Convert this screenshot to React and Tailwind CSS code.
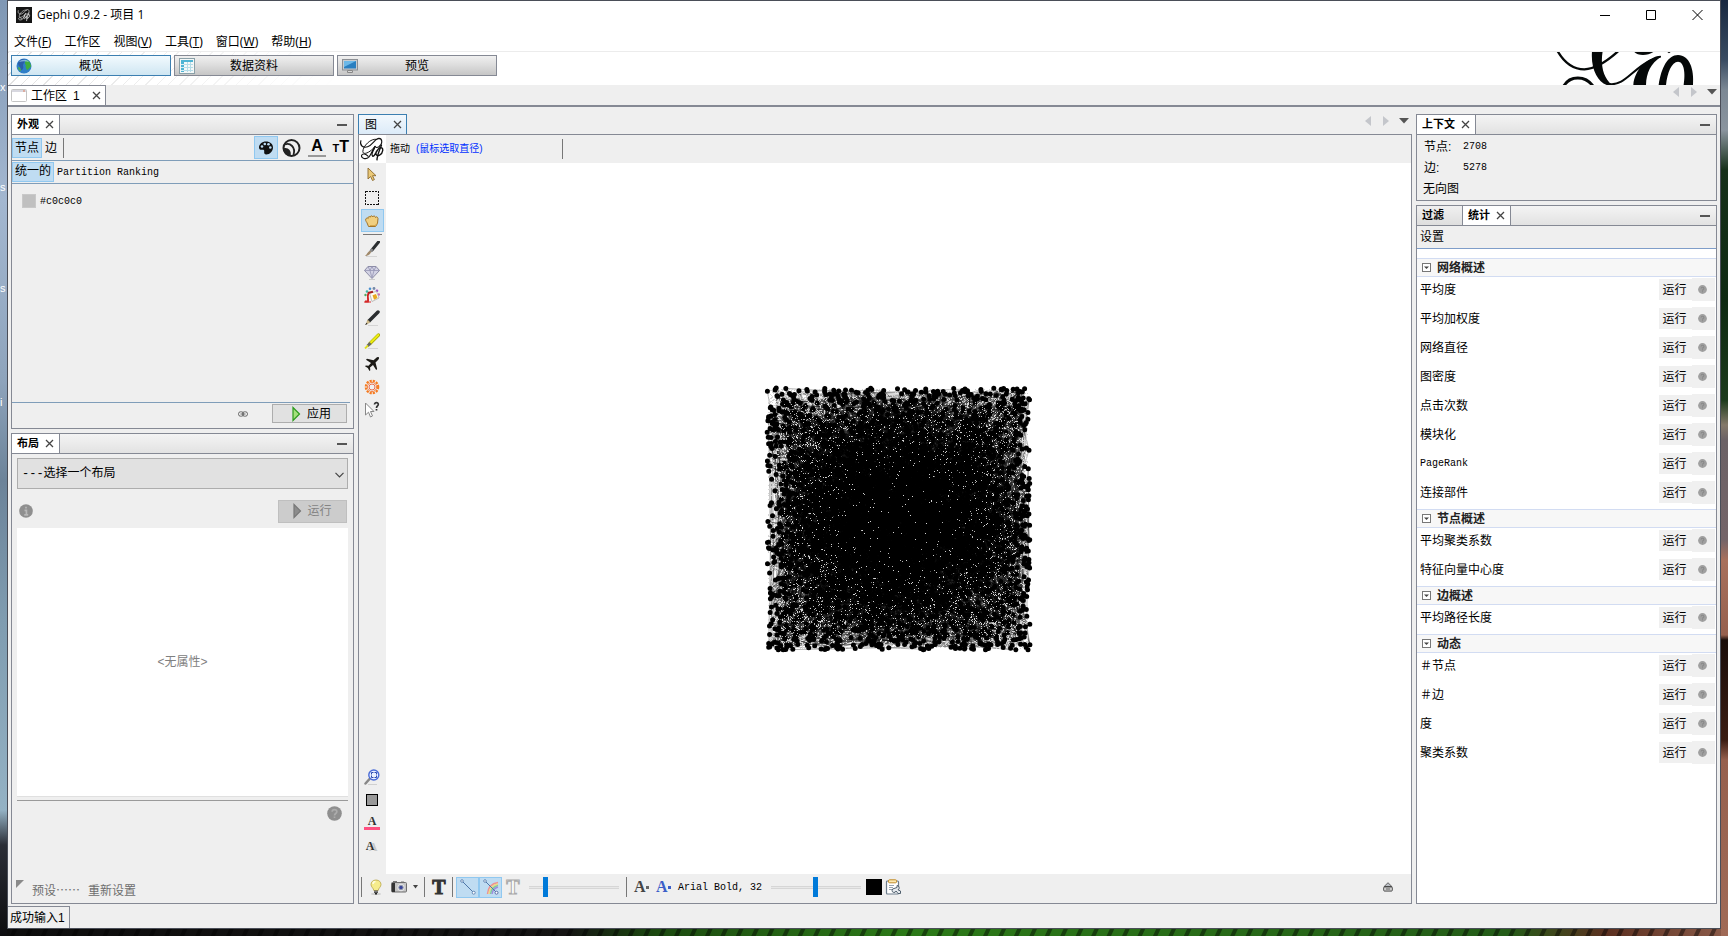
import React from "react";
import clsx from "clsx";

const mono = "font-['Liberation_Mono','Noto_Sans_CJK_SC',monospace] text-[10px]";

/* ---------- random graph drawing ---------- */

function makeRandom(seed) {
  let s = seed;
  return () => {
    s = (s * 1664525 + 1013904223) % 4294967296;
    return s / 4294967296;
  };
}

function buildGraph() {
  const rand = makeRandom(2708);
  const nodes = Array.from({ length: 2708 }, () => [3 + rand() * 263, 3 + rand() * 262]);
  const edges = Array.from({ length: 5278 }, () => {
    const a = nodes[Math.floor(rand() * nodes.length)];
    const b = nodes[Math.floor(rand() * nodes.length)];
    return `M${a[0].toFixed(1)} ${a[1].toFixed(1)}L${b[0].toFixed(1)} ${b[1].toFixed(1)}`;
  });
  const inner = [];
  const outer = [];
  for (let i = 0; i < 26000; i++) {
    const x = Math.floor(4 + rand() * 260);
    const y = Math.floor(4 + rand() * 260);
    const d = Math.hypot(x - 134, y - 134) / 160;
    if (rand() < 0.03 + 0.85 * d ** 3) {
      (rand() < 0.2 && Math.max(Math.abs(x - 134), Math.abs(y - 134)) < 118 ? inner : outer).push(`M${x} ${y}h1v1h-1z`);
    }
  }
  return {
    nodePath: nodes.map(([x, y]) => `M${x.toFixed(1)} ${y.toFixed(1)}h.01`).join(""),
    edgePath: edges.join(""),
    innerPath: inner.join(""),
    outerPath: outer.join(""),
  };
}

const graph = buildGraph();

function GraphDrawing() {
  return (
    <svg width="269" height="268" viewBox="0 0 269 268" role="img" aria-label="图">
      <path d={graph.edgePath} stroke="#000" strokeWidth="0.3" fill="none" />
      <path d={graph.outerPath} fill="#d4d4d4" shapeRendering="crispEdges" />
      <path d={graph.nodePath} stroke="#000" strokeWidth="5" strokeLinecap="round" fill="none" />
      <path d={graph.innerPath} fill="#b4b4b4" shapeRendering="crispEdges" />
    </svg>
  );
}

/* ---------- icons ---------- */

function Svg({ size = 16, box = 16, children, className }) {
  return (
    <svg width={size} height={size} viewBox={`0 0 ${box} ${box}`} fill="none" className={clsx("shrink-0", className)} aria-hidden="true">
      {children}
    </svg>
  );
}

function LogoMark({ color = "#111", width = 26, height = 28 }) {
  return (
    <svg width={width} height={height} viewBox="0 0 81 84" fill="none" stroke={color} strokeWidth="3.4" strokeLinecap="round" aria-hidden="true">
      <path d="M6 16C1 30 12 40 27 35C44 29 50 9 62 9C74 10 74 27 62 35C57 38 52 37 50 34" />
      <path d="M56 12C36 7 12 34 12 50C13 62 34 54 50 34" strokeWidth="3" />
      <path d="M50 34C42 44 38 60 30 68C22 75 6 72 8 62C11 54 22 58 28 64" />
      <path d="M48 40C40 52 38 62 43 65C52 64 54 42 66 38C78 36 76 54 64 61C56 65 50 60 54 50" strokeWidth="4.2" />
      <path d="M70 30C64 46 57 60 56 76" strokeWidth="4.2" />
    </svg>
  );
}

function BannerLogo() {
  return (
    <svg width="140" height="33" viewBox="0 0 420 99" fill="#050808" aria-hidden="true">
      <g fill="none" stroke="#050808">
        <path d="M4-4C28 38 58 52 85 52C122 50 155 26 186-2" strokeWidth="7" />
        <path d="M24 101C42 70 88 70 110 101" strokeWidth="9" />
        <path d="M160 96C205 102 225 55 285 24C295 18 305 14 314 14" strokeWidth="6" />
      </g>
      <path d="M108-2H140C134 32 138 74 168 99H152C124 88 104 50 108-2Z" />
      <path d="M315 12C272 18 236 52 232 99H270C271 62 284 34 315 14Z" />
      <path d="M308 99C316 46 336 9 366 9C400 10 415 50 411 99H383C389 62 384 29 366 29C347 29 334 62 330 99Z" />
      <path d="M235 0C245 12 275 12 292 0ZM334 0L339 4L344 0Z" />
    </svg>
  );
}

const GlobeIcon = () => (
  <Svg>
    <circle cx="8" cy="8" r="7.5" fill="#2f7fc8" />
    <path d="M2 5C4 1 8 0 9 2C9 5 7 5 7 8C8 10 6 13 5 12C5 9 2 8 2 5Z" fill="#2a5ea8" />
    <path d="M10 2C14 3 15 6 15 9C13 9 13 12 11 12C10 10 9 9 10 7C8 6 9 4 10 2Z" fill="#3fae3f" />
    <path d="M2 9C4 9 5 11 5 13C3 13 2 11 2 9Z" fill="#49b04a" />
    <path d="M3 4C5 1 11 1 13 4C10 3 6 3 3 4Z" fill="#a9d4f2" opacity=".7" />
  </Svg>
);
const TableIcon = () => (
  <Svg>
    <rect x=".5" y=".5" width="15" height="15" fill="#f4f8f8" stroke="#8aa0a8" />
    <rect x="2" y="2" width="12" height="2" fill="#4db4d4" />
    <rect x="2" y="4" width="3" height="10" fill="#4db4d4" />
    <path d="M5 6.500h9M5 9.500h9M5 12.500h9M8.500 4v10M11.500 4v10" stroke="#b4dce8" />
    <path d="M2 6.500h3M2 9.500h3M2 12.500h3" stroke="#d4eef6" />
  </Svg>
);
const MonitorIcon = () => (
  <Svg>
    <rect x=".5" y="1.500" width="15" height="10.500" fill="#c8ccd0" stroke="#8c8f94" />
    <rect x="2" y="3" width="12" height="7.500" fill="#2a7fc0" />
    <path d="M2 3h12L2 9z" fill="#6cb8e8" />
    <path d="M5.500 12.500h5v2h-5z" fill="#d8d8d8" stroke="#888" />
  </Svg>
);
const WindowIcon = () => (
  <Svg>
    <rect x=".5" y="1.500" width="15" height="12" rx="1" fill="#fff" stroke="#c4c4c4" />
    <path d="M1 3h14" stroke="#d8d8e0" strokeWidth="2" />
    <path d="M12 3h2" stroke="#e08060" />
  </Svg>
);
const PaletteIcon = () => (
  <Svg>
    <path d="M8 1.500C4 1.500 1 4.200 1 7.500c0 2 1.500 2.600 3 2.300 1.600-.3 2.500.2 2.200 1.700-.3 1.700.5 3 2 3C12 14.500 15 11 15 7.500 15 4 12 1.500 8 1.500Z" fill="#111" />
    <g fill="#bddcf4"><circle cx="4" cy="6.500" r="1.300" /><circle cx="6.800" cy="4" r="1.300" /><circle cx="10.500" cy="4.200" r="1.300" /><circle cx="12.300" cy="7.500" r="1.300" /></g>
  </Svg>
);
const SizeIcon = () => (
  <Svg size={20} box={20}>
    <circle cx="10.500" cy="10" r="8" stroke="#222" strokeWidth="2" />
    <path d="M4 6.500C9 4.500 15 9 12.500 17" stroke="#222" strokeWidth="1.800" />
    <path d="M2.500 10.500C6 9 11 12 9.500 18C5 17.500 2.500 15 2.500 10.500Z" fill="#222" />
  </Svg>
);
const CursorIcon = () => (
  <Svg>
    <path d="M4 1v11l2.600-2.500 1.900 4 1.900-.9-1.900-3.900h3.500z" fill="#eac978" stroke="#8d6a2c" strokeWidth=".9" />
  </Svg>
);
const SelectRectIcon = () => (
  <Svg><rect x="1.500" y="1.500" width="13" height="13" stroke="#111" strokeDasharray="2 1" shapeRendering="crispEdges" /></Svg>
);
const HandIcon = () => (
  <Svg>
    <path d="M1.800 6C1 8 3 9 3.500 11L4.500 13.500H11.500L13.500 10.500L14 5.500C13.500 3.500 12 3.500 11.500 4.500C11 2.500 9.300 2.500 8.700 4C8.200 2.300 6.500 2.500 6.200 4.200C5.300 3 4 3.500 4.200 5.500C3.500 4.500 2.300 5 1.800 6Z" fill="#f0cf80" stroke="#a2742a" />
    <path d="M6 12.500h5.500l1-2" stroke="#d6a84c" />
  </Svg>
);
const BrushIcon = () => (
  <Svg>
    <path d="M2 15.500h11" stroke="#d4d4d4" />
    <path d="M14.500 1L8 9" stroke="#2b2e30" strokeWidth="3" strokeLinecap="round" />
    <path d="M8.500 8L6 11" stroke="#888" strokeWidth="2.500" />
    <path d="M7 10.500C6.500 14 3 15 1 15C3 13.500 3.500 11 5.500 10Z" fill="#a0896a" />
  </Svg>
);
const DiamondIcon = () => (
  <Svg>
    <path d="M4 2.500h8l3.500 4L8 14.500.5 6.500z" fill="#d2d2e4" stroke="#8c8ca6" />
    <path d="M.5 6.500h15M4 2.500l2 4L8 14l2-7.500 2-4M6 6.500l2-4 2 4" stroke="#9696b4" strokeWidth=".8" />
    <path d="M5 15.500h6" stroke="#ccc" />
  </Svg>
);
const PaintIcon = () => (
  <Svg>
    <g><circle cx="3" cy="4.500" r="1.300" fill="#40b8a8" /><circle cx="6" cy="1.800" r="1.300" fill="#4a90d0" /><circle cx="10" cy="1.500" r="1.400" fill="#7488a8" /><circle cx="13" cy="3.800" r="1.300" fill="#a050c8" /><circle cx="14.800" cy="7.500" r="1.200" fill="#c868b8" /><circle cx="1.500" cy="8" r="1.200" fill="#50a860" /></g>
    <path d="M5.500 6L12.500 4.500L15 11L8 14.500Z" fill="#fffaf0" stroke="#a8a8a8" strokeWidth=".7" />
    <path d="M8.500 8.200l3.500-1.200 1.500 4-3.500 1.700z" fill="#e8a820" />
    <path d="M4 6L9 4.800" stroke="#a82020" strokeWidth="2" />
    <path d="M4.500 6C3 9 4.500 12 4 14.500H1" stroke="#d01c1c" strokeWidth="1.800" />
    <path d="M0 15h7" stroke="#d83030" />
  </Svg>
);
const PencilIcon = () => (
  <Svg>
    <path d="M4 15.500h10" stroke="#d4d4d4" />
    <path d="M14 2L5 11" stroke="#2b2e30" strokeWidth="3.500" strokeLinecap="round" />
    <path d="M3.500 9.500l3 3L1.500 15z" fill="#cdb98a" />
    <path d="M1 15l1.500-2.200 1 1.200z" fill="#222" />
  </Svg>
);
const HighlighterIcon = () => (
  <Svg>
    <path d="M4 15.500h10" stroke="#d4d4d4" />
    <path d="M14.500 2L6 10.500" stroke="#a8a800" strokeWidth="3.200" strokeLinecap="round" />
    <path d="M14.300 2L6 10.300" stroke="#ecec14" strokeWidth="2" strokeLinecap="round" />
    <path d="M6.500 10L3.500 13" stroke="#666" strokeWidth="2.800" />
    <path d="M4 12.500L1 15.500" stroke="#dede20" strokeWidth="1.800" />
  </Svg>
);
const PlaneIcon = () => (
  <Svg>
    <path d="M14.800 1.200C14 .6 12.800 1.200 11.800 2.200L9.500 4.300L3 2.800L2 3.800L7 7L4.500 9.800L1.800 9.500L1 10.300L3.800 12L5.500 15L6.300 14.200L6 11.500L9 9L12.200 14L13.200 13L11.500 6.600L13.800 4.200C14.800 3.200 15.400 2 14.800 1.200Z" fill="#1c1a16" />
  </Svg>
);
const SunIcon = () => (
  <Svg>
    <circle cx="8" cy="8" r="6.200" stroke="#f57a20" strokeWidth="2.200" strokeDasharray="2.200 1.050" />
    <circle cx="8" cy="8" r="4.600" stroke="#f4884a" />
    <circle cx="8" cy="8" r="3" stroke="#e86040" strokeWidth=".9" fill="#f0f0f0" />
  </Svg>
);
const HelpCursorIcon = () => (
  <Svg size={18} box={18}>
    <path d="M2.500 2v12l3-2.800 2 4.800 2-1-2-4.500h3.500z" fill="#fff" stroke="#888" />
    <path d="M11.500 3.500C11.500 1 15.500 1 15.300 3.500C15.200 5 13.500 5 13.500 7M13.500 8v1.500" stroke="#333" strokeWidth="1.700" />
  </Svg>
);
const MagnifierIcon = () => (
  <Svg>
    <path d="M5.500 10L1.500 14.500" stroke="#888" strokeWidth="2.500" strokeLinecap="round" />
    <circle cx="9.800" cy="6" r="5" fill="#eaf1ff" stroke="#4a6cd8" strokeWidth="1.400" />
    <path d="M7.500 5.500v-2h2M10.500 3.500h2v2M12.500 6.500v2h-2M9.500 8.500h-2v-2" stroke="#2a48b0" />
    <path d="M4 15.500h9" stroke="#d0d0d0" />
  </Svg>
);
const BulbIcon = () => (
  <Svg>
    <ellipse cx="8" cy="15" rx="5" ry="1" fill="#ccc" />
    <path d="M8 1C4.800 1 3 3.200 3 5.500C3 8 5.500 9 5.800 11.500H10.200C10.500 9 13 8 13 5.500C13 3.200 11.200 1 8 1Z" fill="#f6ec8c" stroke="#b8a448" strokeWidth=".8" />
    <path d="M5 5C5 3.500 6 2.500 7.500 2.500" stroke="#fffde0" strokeWidth="1.500" />
    <path d="M6 12h4M6 13.300h4" stroke="#555" strokeWidth="1.200" /><path d="M7 14.800h2" stroke="#222" strokeWidth="1.500" />
  </Svg>
);
const CameraIcon = () => (
  <Svg>
    <path d="M2 2.500h4M10 3h3" stroke="#777" />
    <rect x=".5" y="3.500" width="15" height="9.500" rx="1" fill="#c4c4c4" stroke="#6e6e6e" />
    <path d="M1 4h3v9H1z" fill="#333" />
    <circle cx="10" cy="8.500" r="3.300" fill="#9aa0b0" stroke="#ececec" /><circle cx="10" cy="8.500" r="1.700" fill="#39459a" />
  </Svg>
);
const LineIcon = () => (
  <Svg>
    <path d="M3 3L13 13" stroke="#4f76a8" /><circle cx="2" cy="2" r="1.300" fill="#fff" stroke="#5a80b0" strokeWidth=".9" /><circle cx="13.700" cy="13.700" r="1.500" fill="#fff" stroke="#5a80b0" strokeWidth=".9" />
  </Svg>
);
const RainbowIcon = () => (
  <Svg>
    <path d="M4.500 15C5 9 8.500 4.500 15 3.500" stroke="#f09090" strokeWidth="1.500" /><path d="M6 15C6.500 10 9.500 6 15 5" stroke="#f0d880" strokeWidth="1.500" />
    <path d="M7.500 15C8 11 10.500 7.500 15 6.500" stroke="#84cc98" strokeWidth="1.500" /><path d="M9 15C9.500 12 11.500 9 15 8" stroke="#9c8ce0" strokeWidth="1.500" />
    <path d="M3 3L13 13" stroke="#4f76a8" /><circle cx="2" cy="2" r="1.300" fill="#fff" stroke="#5a80b0" strokeWidth=".9" /><circle cx="13.500" cy="13.700" r="1.500" fill="#fff" stroke="#5060a0" strokeWidth=".9" />
  </Svg>
);
const ClipboardIcon = () => (
  <Svg>
    <rect x="1.500" y="2" width="12" height="13" rx="1" fill="#fff" stroke="#6c7c8c" strokeWidth="1.200" />
    <rect x="3.500" y=".8" width="8" height="3" rx="1" fill="#fbe8b0" stroke="#c08a28" />
    <path d="M4 6.500h5M4 8.500h4M4 10.500h3" stroke="#98a4b0" />
    <path d="M9 9.500a2 2 0 1 0 2 2.500l2 2.500h2.500V12l-2.500-1.200A2.300 2.300 0 0 0 12 6.500v2z" fill="#e6eaee" stroke="#50606e" strokeWidth="1" />
  </Svg>
);
const EjectIcon = () => (
  <Svg size={10} box={10}>
    <path d="M5 .7L8.800 4.500H1.200z" fill="#bcc0c6" stroke="#444" strokeWidth=".8" /><rect x=".8" y="5" width="8.400" height="4" rx=".6" fill="#fff" stroke="#333" strokeWidth="1" /><path d="M2.500 7h5" stroke="#333" />
  </Svg>
);
const Cross = ({ size = 9 }) => (
  <Svg size={size} box={9}><path d="M1 1l7 7M8 1l-7 7" stroke="#444" strokeWidth="1.300" /></Svg>
);
const PlayIcon = ({ gray }) => (
  <Svg>
    <path d="M5 1.500v13L11.500 8z" fill={gray ? "#8c8c8c" : "#a4e07c"} stroke={gray ? "#777" : "#2c9a1c"} strokeWidth="1.200" />
  </Svg>
);

function RoundBadge({ mark, size }) {
  return (
    <svg width={size} height={size} viewBox="0 0 16 16" aria-hidden="true" className="shrink-0">
      <circle cx="8" cy="8" r="7.800" fill={mark === "small" ? "#a0a0a0" : "#8f8f8f"} />
      {mark === "info" ? (
        <path d="M8 3v2.200M6.300 7.300H8.500V12.500M6 12.500h4.500" stroke="#b8b8b8" strokeWidth="1.900" fill="none" />
      ) : (
        <path d="M5.500 6.200C5.500 3.200 10.500 3.200 10.500 6.200C10.500 8 8 8 8 10M8 11.200v1.600" stroke={mark === "small" ? "#888888" : "#acacac"} strokeWidth="1.800" fill="none" />
      )}
    </svg>
  );
}

function ScrollArrows() {
  return (
    <div className="flex items-center gap-3">
      <button aria-label="向左"><svg width="6" height="10" viewBox="0 0 6 10"><path d="M6 0v10L0 5z" fill="#c4c6cb" /></svg></button>
      <button aria-label="向右"><svg width="6" height="10" viewBox="0 0 6 10"><path d="M0 0v10l6-5z" fill="#c4c6cb" /></svg></button>
      <button aria-label="列表" className="-ml-0.5"><svg width="10" height="6" viewBox="0 0 10 6"><path d="M0 0h10L5 5.500z" fill="#555" /></svg></button>
    </div>
  );
}

/* ---------- shared panel parts ---------- */

function PanelHeader({ tabs }) {
  return (
    <div className="flex h-5 shrink-0 items-stretch border-b border-[#858994] bg-linear-to-b from-[#f4f4f4] to-[#e2e2e2]">
      {tabs.map((t) => (
        <button
          key={t.label}
          className={clsx(
            "flex items-center gap-1.5 border-r border-[#858994] pl-[5px] text-[11px] font-bold leading-none",
            t.active ? "bg-white pr-[5px]" : "bg-linear-to-b from-[#f0f0f0] to-[#dedede] pr-[18px]"
          )}
        >
          {t.label}
          {t.active && <Cross />}
        </button>
      ))}
      <button aria-label="最小化" className="ml-auto flex items-center pr-1.5">
        <span className="block h-0.5 w-2.5 bg-[#555]" />
      </button>
    </div>
  );
}

const sel = "border border-[#90c8f0] bg-[#bfdcf2]";

/* ---------- window chrome ---------- */

const menus = [["文件", "F"], ["工作区"], ["视图", "V"], ["工具", "T"], ["窗口", "W"], ["帮助", "H"]];

function TitleBar() {
  return (
    <header className="flex h-7 shrink-0 items-center bg-white pl-2 pr-[17px]">
      <span className="flex size-4 items-center justify-center bg-[#151515]"><LogoMark color="#fff" width={14} height={14} /></span>
      <h1 className="ml-[5px] flex-1 font-['Open_Sans','Noto_Sans_CJK_SC',sans-serif] text-xs text-black">Gephi 0.9.2 - 项目 1</h1>
      <div className="flex items-center gap-9">
        <button aria-label="最小化"><svg width="10" height="10"><path d="M0 5.500h10" stroke="#000" /></svg></button>
        <button aria-label="最大化"><svg width="10" height="10"><path d="M.5.5h9v9h-9z" stroke="#000" fill="none" /></svg></button>
        <button aria-label="关闭"><svg width="11" height="10"><path d="M.5 0l10 10M10.500 0l-10 10" stroke="#000" /></svg></button>
      </div>
    </header>
  );
}

function MenuBar() {
  return (
    <nav className="flex h-[23px] shrink-0 items-center gap-[13px] border-b border-[#ececec] bg-white pl-1.5 pt-1 font-['Noto_Sans','Noto_Sans_CJK_SC',sans-serif] text-xs leading-none">
      {menus.map(([name, key]) => (
        <button key={name}>
          {name}
          {key && <>(<span className="underline">{key}</span>)</>}
        </button>
      ))}
    </nav>
  );
}

function Perspectives() {
  const items = [
    { label: "概览", icon: <GlobeIcon />, active: true },
    { label: "数据资料", icon: <TableIcon /> },
    { label: "预览", icon: <MonitorIcon /> },
  ];
  return (
    <div className="flex h-[33px] shrink-0 justify-between bg-[linear-gradient(to_right,transparent,white_330px),repeating-linear-gradient(135deg,#e2e2e2_0_1px,white_1px_8px)] pl-[3px] pr-6">
      <div className="flex gap-[3px] pt-[3px]">
        {items.map((i) => (
          <button
            key={i.label}
            className={clsx(
              "flex h-[21px] w-40 items-center border pl-1 pr-5 text-xs leading-none",
              i.active
                ? "border-[#3c7fb1] bg-linear-to-b from-[#f2fafe] to-[#cfe6f2]"
                : "border-[#858994] bg-linear-to-b from-[#f0f0f0] via-[#dcdcdc] to-[#c6c6c6]"
            )}
          >
            {i.icon}
            <span className="flex-1">{i.label}</span>
          </button>
        ))}
      </div>
      <BannerLogo />
    </div>
  );
}

function WorkspaceBar() {
  return (
    <div className="flex h-[22px] shrink-0 justify-between border-b-2 border-[#858994]">
      <button className="flex items-center border-r border-t border-[#858994] bg-white pl-[3px] pr-1 text-xs leading-none">
        <WindowIcon />
        <span className="ml-1">工作区</span>
        <span className="ml-1.5">1</span>
        <span className="ml-3"><Cross /></span>
      </button>
      <div className="flex items-start pr-[3px] pt-0.5"><ScrollArrows /></div>
    </div>
  );
}

/* ---------- left column ---------- */

function AppearancePanel() {
  return (
    <section aria-label="外观" className="flex h-[315px] shrink-0 flex-col border border-[#858994]">
      <PanelHeader tabs={[{ label: "外观", active: true }]} />
      <div className="flex h-[26px] shrink-0 items-center border-b border-[#7f9db9] text-xs leading-none">
        <button className={clsx("h-5 px-0.5", sel)}>节点</button>
        <button className="ml-[3px]">边</button>
        <span className="ml-1.5 h-5 w-px bg-[#777]" />
        <div className="ml-auto flex items-center gap-[3px] pr-1">
          <button aria-label="颜色" className={clsx("flex h-[23px] w-6 items-center justify-center", sel)}><PaletteIcon /></button>
          <button aria-label="大小" className="mr-1"><SizeIcon /></button>
          <button aria-label="标签颜色" className="flex w-[18px] flex-col items-center gap-0.5 font-['Liberation_Sans',sans-serif] text-base font-bold leading-[14px]">
            A<span className="h-0.5 w-full bg-[#999]" />
          </button>
          <button aria-label="标签尺寸" className="ml-0.5 flex w-[18px] items-baseline justify-end font-['Liberation_Sans',sans-serif] text-base font-bold leading-4"><span className="text-[11px]">T</span>T</button>
        </div>
      </div>
      <div className={clsx("flex h-[23px] shrink-0 items-center border-b border-[#7f9db9]", mono)}>
        <button className={clsx("h-5 px-0.5 text-xs leading-none", sel)}>统一的</button>
        <button className="ml-[3px]">Partition</button>
        <button className="ml-1.5">Ranking</button>
      </div>
      <div className={clsx("flex flex-1 items-start gap-1 pl-2.5 pt-2.5", mono)}>
        <button aria-label="选择颜色" className="size-3.5 border border-[#c9c9c9] bg-[#c0c0c0]" />
        <span>#c0c0c0</span>
      </div>
      <div className="mr-[3px] flex h-[26px] shrink-0 items-start justify-end border-t border-[#7f9db9] pr-[3px] pt-px">
        <button aria-label="链接" className="mr-6 flex h-[19px] items-center">
          <svg width="10" height="6" viewBox="0 0 10 6" fill="none" stroke="#666"><rect x=".5" y=".8" width="5" height="4.400" rx="2" /><rect x="4.500" y=".8" width="5" height="4.400" rx="2" /><path d="M2.500 3h5" /></svg>
        </button>
        <button className="flex h-[19px] w-[75px] items-center justify-center gap-[3px] border border-[#adadad] bg-[#e1e1e1] text-xs leading-none">
          <PlayIcon />应用
        </button>
      </div>
    </section>
  );
}

function LayoutPanel() {
  return (
    <section aria-label="布局" className="flex min-h-0 flex-1 flex-col border border-[#858994]">
      <PanelHeader tabs={[{ label: "布局", active: true }]} />
      <div className="flex flex-1 flex-col px-[5px]">
        <div className="relative mt-1">
          <select aria-label="布局" className="h-[31px] w-full appearance-none border border-[#adadad] bg-[#e1e1e1] pl-1 font-['Liberation_Mono','Noto_Sans_CJK_SC',monospace] text-xs">
            <option>---选择一个布局</option>
          </select>
          <svg width="9" height="6" viewBox="0 0 9 6" className="pointer-events-none absolute right-1 top-3.5"><path d="M.5.8l4 4 4-4" fill="none" stroke="#444" strokeWidth="1.200" /></svg>
        </div>
        <div className="mt-2.5 flex h-6 items-center justify-between pl-0.5 pr-px">
          <RoundBadge mark="info" size={14} />
          <button disabled className="flex h-[23px] w-[69px] items-center justify-center gap-0.5 border border-[#bfbfbf] bg-[#cccccc] pr-1 text-xs leading-none text-[#838383]">
            <PlayIcon gray />运行
          </button>
        </div>
        <div className="mt-[5px] flex flex-1 items-center justify-center border-b border-[#e0e0e0] bg-white text-xs text-[#808080]">&lt;无属性&gt;</div>
        <div className="mt-[3px] flex h-[66px] shrink-0 items-start justify-end border-t border-[#9a9a9a] pr-1.5 pt-[5px]">
          <button aria-label="帮助" className="flex"><RoundBadge mark="help" size={15} /></button>
        </div>
      </div>
      <div className="flex h-[37px] shrink-0 items-start gap-2 pl-1 pt-3.5 font-['Noto_Sans_CJK_SC',sans-serif] text-xs leading-none text-[#6e6e6e]" lang="zh-CN">
        <svg width="8" height="8"><path d="M0 0h8L0 8z" fill="#8a8a8a" /></svg>
        <button className="pt-1">预设……</button>
        <button className="pt-1">重新设置</button>
      </div>
    </section>
  );
}

/* ---------- graph panel ---------- */

const tools = [
  { label: "直接选取", icon: <CursorIcon /> },
  { label: "矩形选取", icon: <SelectRectIcon /> },
  { label: "拖动", icon: <HandIcon />, active: true },
  null,
  { label: "画笔", icon: <BrushIcon /> },
  { label: "尺寸", icon: <DiamondIcon /> },
  { label: "着色", icon: <PaintIcon /> },
  { label: "节点铅笔", icon: <PencilIcon /> },
  { label: "边铅笔", icon: <HighlighterIcon /> },
  { label: "最短路径", icon: <PlaneIcon /> },
  { label: "热图", icon: <SunIcon /> },
  { label: "编辑", icon: <HelpCursorIcon /> },
];

function ToolColumn() {
  const tool = "flex h-[23px] w-[23px] items-center justify-center";
  return (
    <div className="flex w-[27px] shrink-0 flex-col items-center pr-px">
      {tools.map((t, i) =>
        t ? (
          <button key={t.label} aria-label={t.label} className={clsx(tool, t.active && sel)}>{t.icon}</button>
        ) : (
          <span key={i} className="my-0.5 h-px w-[19px] bg-[#777]" />
        )
      )}
      <div className="mt-auto flex flex-col pb-[17px] font-['Liberation_Serif',serif] text-xs font-bold leading-none text-[#333]">
        <button aria-label="居中" className={tool}><MagnifierIcon /></button>
        <button aria-label="重置颜色" className={tool}><span className="size-3 border border-black bg-[#999]" /></button>
        <button aria-label="重置标签颜色" className={clsx(tool, "flex-col")}>A<span className="h-[3px] w-4 bg-[#ff5080]" /></button>
        <button aria-label="重置标签可见" className={clsx(tool, "pr-1 [text-shadow:3px_1px_0_#c8c8c8]")}>A</button>
      </div>
    </div>
  );
}

const range =
  "h-5 w-[90px] appearance-none bg-transparent bg-[linear-gradient(#d6d6d6,#d6d6d6_1px,#e8e8e8_1px,#e8e8e8_2px,#d6d6d6_2px)] bg-[length:100%_3px] bg-center bg-no-repeat [&::-webkit-slider-thumb]:h-5 [&::-webkit-slider-thumb]:w-[5px] [&::-webkit-slider-thumb]:appearance-none [&::-webkit-slider-thumb]:bg-[#007ad9]";

const Divider = ({ className }) => <span className={clsx("h-5 w-px shrink-0 bg-[#777]", className)} />;

function SettingsBar() {
  const serif = "font-['Liberation_Serif',serif] font-bold leading-none";
  return (
    <div className="flex h-[29px] shrink-0 items-center pb-[3px] pl-0.5 pr-[18px]">
      <Divider />
      <button aria-label="背景" className="ml-1.5"><BulbIcon /></button>
      <button aria-label="截图" className="ml-[7px] flex items-center gap-1.5">
        <CameraIcon /><svg width="5" height="4"><path d="M0 0h5L2.500 3.500z" fill="#444" /></svg>
      </button>
      <Divider className="ml-1.5" />
      <button aria-label="显示节点标签" className={clsx("ml-1.5 w-4 text-xl text-[#333] [-webkit-text-stroke:1px_#333]", serif)}>T</button>
      <Divider className="ml-[5px]" />
      <button aria-label="显示边" className={clsx("ml-[3px] flex h-[21px] w-[23px] items-center justify-center", sel)}><LineIcon /></button>
      <button aria-label="边颜色" className={clsx("flex h-[21px] w-[23px] items-center justify-center", sel)}><RainbowIcon /></button>
      <button aria-label="显示边标签" className={clsx("ml-[3px] w-4 text-xl text-white [-webkit-text-stroke:1px_#aaa]", serif)}>T</button>
      <input aria-label="边粗细" type="range" min="0" max="100" defaultValue="17" className={clsx("ml-2", range)} />
      <Divider className="ml-[7px]" />
      <button aria-label="标签尺寸模式" className={clsx("ml-[7px] flex w-4 items-center text-base text-[#444]", serif)}>A<span className="size-[3px] shrink-0 bg-[#666]" /></button>
      <button aria-label="标签颜色模式" className={clsx("ml-1.5 flex w-4 items-center text-base text-[#3c5fc8]", serif)}>A<span className="size-[3px] shrink-0 bg-[#3c5fc8]" /></button>
      <button className={clsx("ml-1.5 whitespace-nowrap", mono)}>Arial Bold, 32</button>
      <input aria-label="字体大小" type="range" min="0" max="100" defaultValue="49" className={clsx("ml-[9px]", range)} />
      <button aria-label="默认颜色" className="ml-[5px] size-4 bg-black" />
      <button aria-label="属性" className="ml-[3px]"><ClipboardIcon /></button>
      <button aria-label="展开" className="ml-auto"><EjectIcon /></button>
    </div>
  );
}

function GraphPanel() {
  return (
    <section aria-label="图" className="flex min-w-0 flex-1 flex-col">
      <div className="flex h-5 shrink-0 items-stretch">
        <button className="flex w-[49px] items-center justify-between border border-b-0 border-[#3c7fb1] bg-linear-to-b from-[#f2f8fd] to-[#dcebf8] pl-1.5 pr-1 text-xs leading-none">
          图<Cross />
        </button>
        <div className="ml-auto flex items-start pr-[3px] pt-0.5"><ScrollArrows /></div>
      </div>
      <div className="flex min-h-0 flex-1 flex-col border border-[#858994]">
        <div className="flex h-7 shrink-0 items-center text-[10px] leading-none">
          <span className="flex w-[27px] shrink-0 bg-white"><LogoMark width={26} height={28} /></span>
          <span className="ml-1">拖动</span>
          <span className="ml-1.5 text-[#0030ff]">(鼠标选取直径)</span>
          <Divider className="ml-[79px]" />
        </div>
        <div className="flex min-h-0 flex-1">
          <ToolColumn />
          <main className="flex flex-1 items-center justify-center bg-white"><GraphDrawing /></main>
        </div>
        <SettingsBar />
      </div>
    </section>
  );
}

/* ---------- right column ---------- */

function ContextPanel() {
  const rows = [["节点:", "2708"], ["边:", "5278"]];
  return (
    <section aria-label="上下文" className="flex h-[87px] shrink-0 flex-col border border-[#858994]">
      <PanelHeader tabs={[{ label: "上下文", active: true }]} />
      <dl className="pl-[7px] pt-px text-xs">
        {rows.map(([k, v]) => (
          <div key={k} className="flex h-[21px] items-center">
            <dt className="w-[39px]">{k}</dt>
            <dd className={mono}>{v}</dd>
          </div>
        ))}
      </dl>
      <p className="flex h-[21px] items-center pl-1.5 text-xs">无向图</p>
    </section>
  );
}

const sections = [
  { title: "网络概述", items: ["平均度", "平均加权度", "网络直径", "图密度", "点击次数", "模块化", "PageRank", "连接部件"] },
  { title: "节点概述", items: ["平均聚类系数", "特征向量中心度"] },
  { title: "边概述", items: ["平均路径长度"] },
  { title: "动态", items: ["＃节点", "＃边", "度", "聚类系数"] },
];

function StatisticsPanel() {
  return (
    <section aria-label="统计" className="flex min-h-0 flex-1 flex-col border border-[#858994]">
      <PanelHeader tabs={[{ label: "过滤" }, { label: "统计", active: true }]} />
      <div className="flex h-[23px] shrink-0 items-center border-b border-[#7f9dc9] pl-[3px] text-xs">设置</div>
      <div className="flex-1 bg-white pt-[9px] text-xs leading-none">
        {sections.map((s) => (
          <div key={s.title}>
            <h2 className="flex h-[19px] items-center gap-1.5 border-y border-[#d2dcf2] bg-[#f7f7f7] pl-[5px] font-bold text-[#222]">
              <svg width="9" height="9"><rect x=".5" y=".5" width="8" height="8" fill="#fff" stroke="#777" /><path d="M2 3.500h5L4.500 6z" fill="#444" /></svg>
              {s.title}
            </h2>
            <ul>
              {s.items.map((item) => (
                <li key={item} className="flex h-[29px] items-start pl-[3px] pr-px pt-px">
                  <span className={clsx("flex h-[23px] flex-1 items-center", item === "PageRank" && mono)}>{item}</span>
                  <button className="mt-px h-[21px] w-[33px] bg-[#f0f0f0] pr-0.5">运行</button>
                  <button aria-label="帮助" className="flex h-[23px] w-[23px] items-center justify-center bg-[#f0f0f0] pr-0.5"><RoundBadge mark="small" size={9} /></button>
                </li>
              ))}
            </ul>
          </div>
        ))}
      </div>
    </section>
  );
}

/* ---------- desktop behind the window ---------- */

function LeftDesktop() {
  return (
    <div className="flex w-[7px] shrink-0 flex-col overflow-hidden bg-[linear-gradient(#7f97b4,#a3b7d0_200px,#8ea4bc_380px,#6c8399_480px,#7f9cb0_620px,#94b2c4_810px,#2b2e36_845px,#0d0d0f)] pt-20 text-[11px] leading-[14px] text-white">
      <span>x</span>
      <span className="mt-[86px]">s</span>
      <span className="mt-[87px]">s</span>
      <span className="mt-[100px]">i</span>
    </div>
  );
}

function BottomDesktop() {
  return (
    <div className="h-[7px] shrink-0 bg-[repeating-linear-gradient(115deg,transparent_0_5px,rgba(0,0,0,0.45)_6px_9px,transparent_10px_14px),linear-gradient(to_right,#0d0d0d,#151413_560px,#1c4a10_650px,#2c7a18_900px,#245c18_1500px,#5c3020_1600px,#8a5a48)]" />
  );
}

export default function App() {
  return (
    <div className="flex min-h-screen bg-[#20262e] font-['Liberation_Sans','Noto_Sans_CJK_SC',sans-serif] text-black">
      <LeftDesktop />
      <div className="flex min-w-0 flex-1 flex-col">
        <div className="flex min-w-0 flex-1 flex-col border border-[#4a4e58] bg-[#efefef]">
          <TitleBar />
          <MenuBar />
          <Perspectives />
          <WorkspaceBar />
          <div className="flex min-h-0 flex-1 gap-1 px-[3px] pt-[7px]">
            <div className="flex w-[343px] shrink-0 flex-col gap-1">
              <AppearancePanel />
              <LayoutPanel />
            </div>
            <GraphPanel />
            <div className="flex w-[301px] shrink-0 flex-col gap-1">
              <ContextPanel />
              <StatisticsPanel />
            </div>
          </div>
          <footer className="mt-0.5 flex h-[22px] shrink-0">
            <output className="flex items-center border-r border-t border-[#858994] pl-0.5 pr-1 text-xs leading-none">成功输入1</output>
          </footer>
        </div>
        <BottomDesktop />
      </div>
      <div className="w-[7px] shrink-0 bg-[linear-gradient(#182840,#3a4c62_60px,#7c8894_90px,#8a949e_130px,#16301a_170px,#0e2a12_300px,#1c3a1c_400px,#84796a_425px,#6b6266_440px,#746468_540px,#a8705c_560px,#96604e_635px,#1a0e0a_640px,#3a1c12_740px,#96604e_760px,#a06a56)]" />
    </div>
  );
}
